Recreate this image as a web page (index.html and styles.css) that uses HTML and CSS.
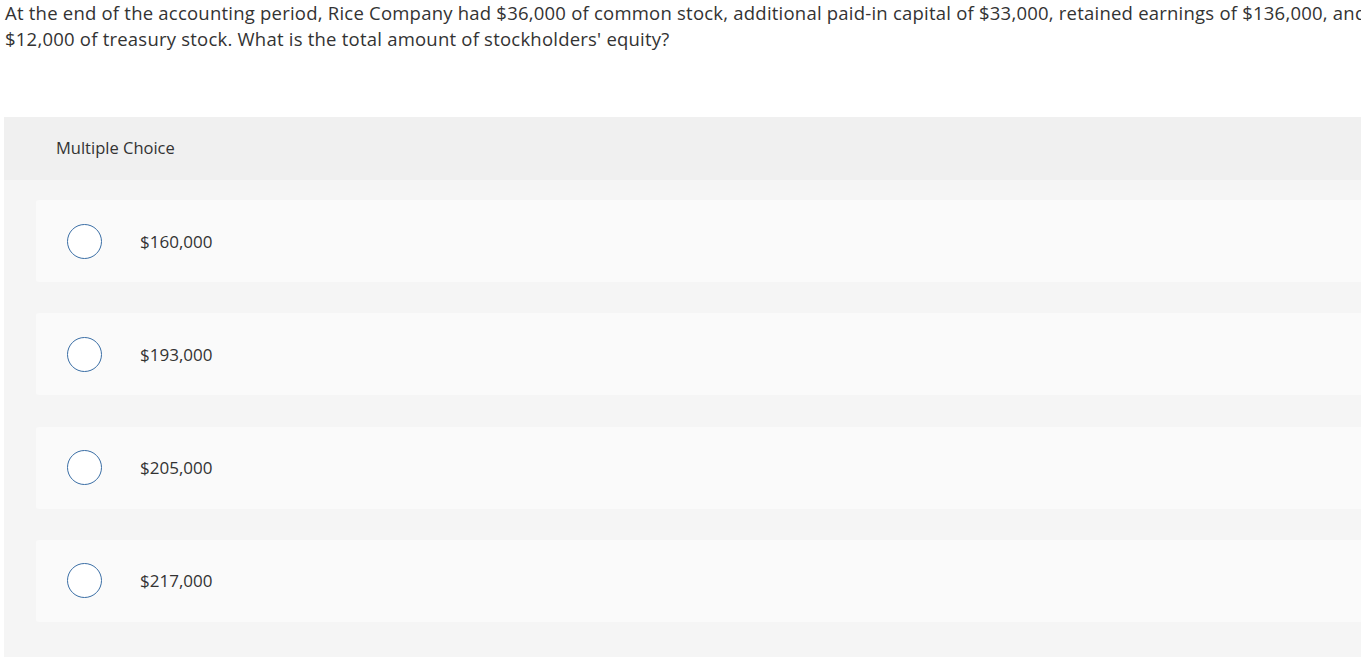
FILE: index.html
```html
<!DOCTYPE html>
<html>
<head>
<meta charset="utf-8">
<link rel="stylesheet" href="styles.css">
</head>
<body>
<div class="page">
  <p class="question">At the end of the accounting period, Rice Company had $36,000 of common stock, additional paid-in capital of $33,000, retained earnings of $136,000, and<br>$12,000 of treasury stock. What is the total amount of stockholders' equity?</p>
  <section class="panel">
    <div class="panel-head">Multiple Choice</div>
    <div class="options">
      <div class="option"><span class="radio"></span><span class="label">$160,000</span></div>
      <div class="option"><span class="radio"></span><span class="label">$193,000</span></div>
      <div class="option"><span class="radio"></span><span class="label">$205,000</span></div>
      <div class="option"><span class="radio"></span><span class="label">$217,000</span></div>
    </div>
  </section>
</div>
</body>
</html>
```
FILE: styles.css
```css
html, body {
  margin: 0;
  padding: 0;
  background: #ffffff;
  overflow: hidden;
}
.page {
  width: 1420px;
  padding-left: 4px;
  font-family: "Open Sans", Lato, sans-serif;
  color: #333333;
}
.question {
  margin: 0;
  padding: 0 0 0 1px;
  font-size: 18.5px;
  letter-spacing: 0.22px;
  line-height: 26px;
  white-space: nowrap;
}
.panel {
  margin-top: 65px;
  background: #f5f5f5;
  padding-bottom: 40px;
}
.panel-head {
  height: 63px;
  box-sizing: border-box;
  padding-bottom: 3px;
  background: #f0f0f0;
  display: flex;
  align-items: center;
  padding-left: 52px;
  font-size: 16.5px;
}
.options {
  display: flex;
  flex-direction: column;
  gap: 31.3px;
  padding: 20px 0 0 32px;
}
.option {
  height: 82px;
  background: #fafafa;
  border-radius: 3px;
  display: flex;
  align-items: center;
  padding-left: 31px;
}
.radio {
  width: 33px;
  height: 33px;
  border: 1px solid #3a6ea5;
  border-radius: 50%;
  background: #ffffff;
  flex: none;
}
.label {
  margin-left: 38px;
  font-size: 17px;
}
```
